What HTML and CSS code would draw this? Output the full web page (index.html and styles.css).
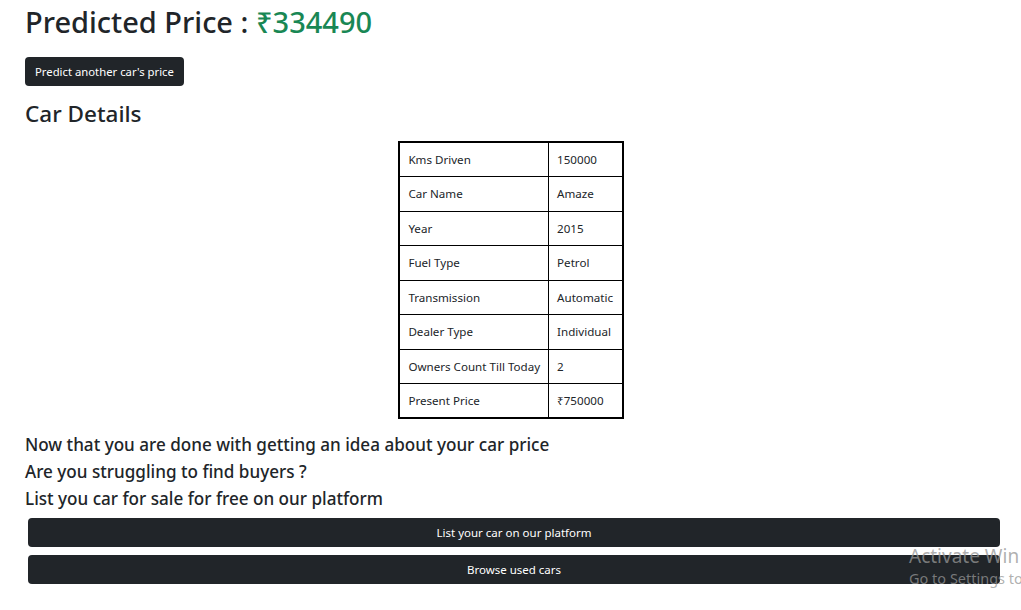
FILE: index.html
```html
<!DOCTYPE html>
<html>
<head>
<meta charset="utf-8">
<link rel="stylesheet" href="styles.css">
</head>
<body>
<div class="page">
  <h1 class="title">Predicted Price : <span class="price">₹334490</span></h1>
  <button class="btn btn-small">Predict another car's price</button>
  <h2 class="subtitle">Car Details</h2>
  <div class="table-wrap">
    <table class="details">
      <tr><td>Kms Driven</td><td>150000</td></tr>
      <tr><td>Car Name</td><td>Amaze</td></tr>
      <tr><td>Year</td><td>2015</td></tr>
      <tr><td>Fuel Type</td><td>Petrol</td></tr>
      <tr><td>Transmission</td><td>Automatic</td></tr>
      <tr><td>Dealer Type</td><td>Individual</td></tr>
      <tr><td>Owners Count Till Today</td><td>2</td></tr>
      <tr><td>Present Price</td><td>₹750000</td></tr>
    </table>
  </div>
  <div class="pitch">
    <p>Now that you are done with getting an idea about your car price</p>
    <p>Are you struggling to find buyers ?</p>
    <p>List you car for sale for free on our platform</p>
  </div>
  <div class="actions">
    <button class="btn btn-block">List your car on our platform</button>
    <button class="btn btn-block">Browse used cars</button>
  </div>
</div>
<div class="watermark">
  <div class="wm-1">Activate Win</div>
  <div class="wm-2">Go to Settings to</div>
</div>
</body>
</html>
```
FILE: styles.css
```css
html, body {
  margin: 0;
  padding: 0;
  background: #fff;
  overflow: hidden;
}
body {
  font-family: "Noto Sans", "Open Sans", sans-serif;
  color: #212529;
  width: 1021px;
  height: 610px;
  position: relative;
}
.page {
  padding: 0 21px 0 25px;
}
.title {
  margin: 3px 0 0;
  font-size: 29px;
  font-weight: 500;
  line-height: 38px;
}
.price {
  color: #198754;
}
.btn {
  display: block;
  background: #212529;
  color: #fff;
  border: 0;
  border-radius: 4px;
  font-family: inherit;
  font-size: 11.3px;
  cursor: pointer;
}
.btn-small {
  margin-top: 16px;
  height: 29px;
  padding: 0 10px;
}
.subtitle {
  margin: 13px 0 0;
  font-size: 22.5px;
  font-weight: 500;
  line-height: 30px;
}
.table-wrap {
  display: flex;
  justify-content: center;
  margin-top: 12px;
  padding-right: 3px;
}
.details {
  border-collapse: collapse;
  border: 2px solid #000;
  font-size: 11.6px;
  table-layout: fixed;
}
.details td {
  border: 1px solid #000;
  height: 34.5px;
  padding: 0 8px;
  white-space: nowrap;
  box-sizing: border-box;
}
.details td:first-child {
  width: 149px;
}
.details td:last-child {
  width: 74px;
}
.pitch {
  margin-top: 12px;
}
.pitch p {
  margin: 0;
  font-size: 17.1px;
  line-height: 27px;
  font-weight: 500;
}
.actions {
  display: flex;
  flex-direction: column;
  gap: 8px;
  margin-top: 6px;
  padding-left: 3px;
}
.btn-block {
  width: 100%;
  height: 29px;
  font-size: 11.5px;
}
.watermark {
  position: absolute;
  left: 909px;
  top: 544px;
  z-index: 10;
  color: rgba(150, 150, 150, 0.75);
  white-space: nowrap;
}
.wm-1 {
  font-size: 19px;
  line-height: 24px;
}
.wm-2 {
  font-size: 14.5px;
  line-height: 20px;
}
```
